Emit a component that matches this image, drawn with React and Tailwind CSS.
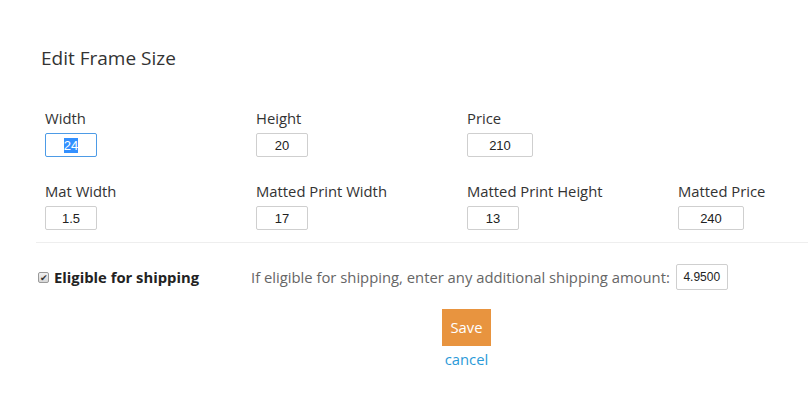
import React from 'react';

const fields = [
  [
    { label: 'Width', value: '24', w: 'w-[52px]', focused: true },
    { label: 'Height', value: '20', w: 'w-[52px]' },
    { label: 'Price', value: '210', w: 'w-[66px]' },
  ],
  [
    { label: 'Mat Width', value: '1.5', w: 'w-[52px]' },
    { label: 'Matted Print Width', value: '17', w: 'w-[52px]' },
    { label: 'Matted Print Height', value: '13', w: 'w-[52px]' },
    { label: 'Matted Price', value: '240', w: 'w-[66px]' },
  ],
];

function Field({ label, value, w, focused }) {
  return (
    <div className="flex flex-col">
      <label className="text-[14.8px] leading-[20px] text-[#333]">{label}</label>
      {focused ? (
        <div className={`${w} mt-[5px] h-[24px] rounded-[2px] border border-[#4d9be6] bg-white flex items-center justify-center font-['Liberation_Sans',Arial,sans-serif] text-[13px] text-[#222]`}>
          <span className="bg-[#3390ff] text-white leading-[15px]">{value}</span>
        </div>
      ) : (
        <input
          defaultValue={value}
          className={`${w} mt-[5px] h-[24px] rounded-[2px] border border-[#cfcfcf] bg-white text-center font-['Liberation_Sans',Arial,sans-serif] text-[13px] text-[#222] outline-none`}
        />
      )}
    </div>
  );
}

export default function App() {
  return (
    <div className="w-[808px] h-[406px] bg-white font-['Open_Sans',sans-serif] text-[#333] overflow-hidden">
      <h1 className="pt-[45px] pl-[41px] text-[19px] leading-[26px] text-[#333]">Edit Frame Size</h1>

      <div className="pl-[45px] mt-[37px] flex flex-col gap-[24px]">
        {fields.map((row, i) => (
          <div key={i} className="grid grid-cols-[211px_211px_211px_211px]">
            {row.map((f) => (
              <Field key={f.label} {...f} />
            ))}
          </div>
        ))}
      </div>

      <div className="ml-[36px] mt-[12px] border-t border-[#eeeeee]" />

      <div className="mt-[21px] flex items-center h-[26px]">
        <span className="ml-[38px] w-[11px] h-[11px] border border-[#9a9a9a] rounded-[2px] bg-gradient-to-b from-[#f0f0f0] to-[#d8d8d8] flex items-center justify-center text-[9px] leading-none text-[#333]">
          ✔
        </span>
        <span className="ml-[5px] text-[14.8px] font-bold text-[#222]">Eligible for shipping</span>
        <span className="ml-[52px] text-[14.8px] text-[#666]">
          If eligible for shipping, enter any additional shipping amount:
        </span>
        <input
          defaultValue="4.9500"
          className="ml-[6px] w-[52px] h-[26px] rounded-[2px] border border-[#cfcfcf] text-center font-['Liberation_Sans',Arial,sans-serif] text-[12px] text-[#222] outline-none"
        />
      </div>

      <div className="mt-[19px] ml-[442px] w-[49px] flex flex-col items-center">
        <button className="w-[49px] h-[37px] bg-[#e8943f] text-white text-[14.8px]">Save</button>
        <a href="#" className="mt-[2px] text-[14.8px] leading-[22px] text-[#2b9ad8]">
          cancel
        </a>
      </div>
    </div>
  );
}
